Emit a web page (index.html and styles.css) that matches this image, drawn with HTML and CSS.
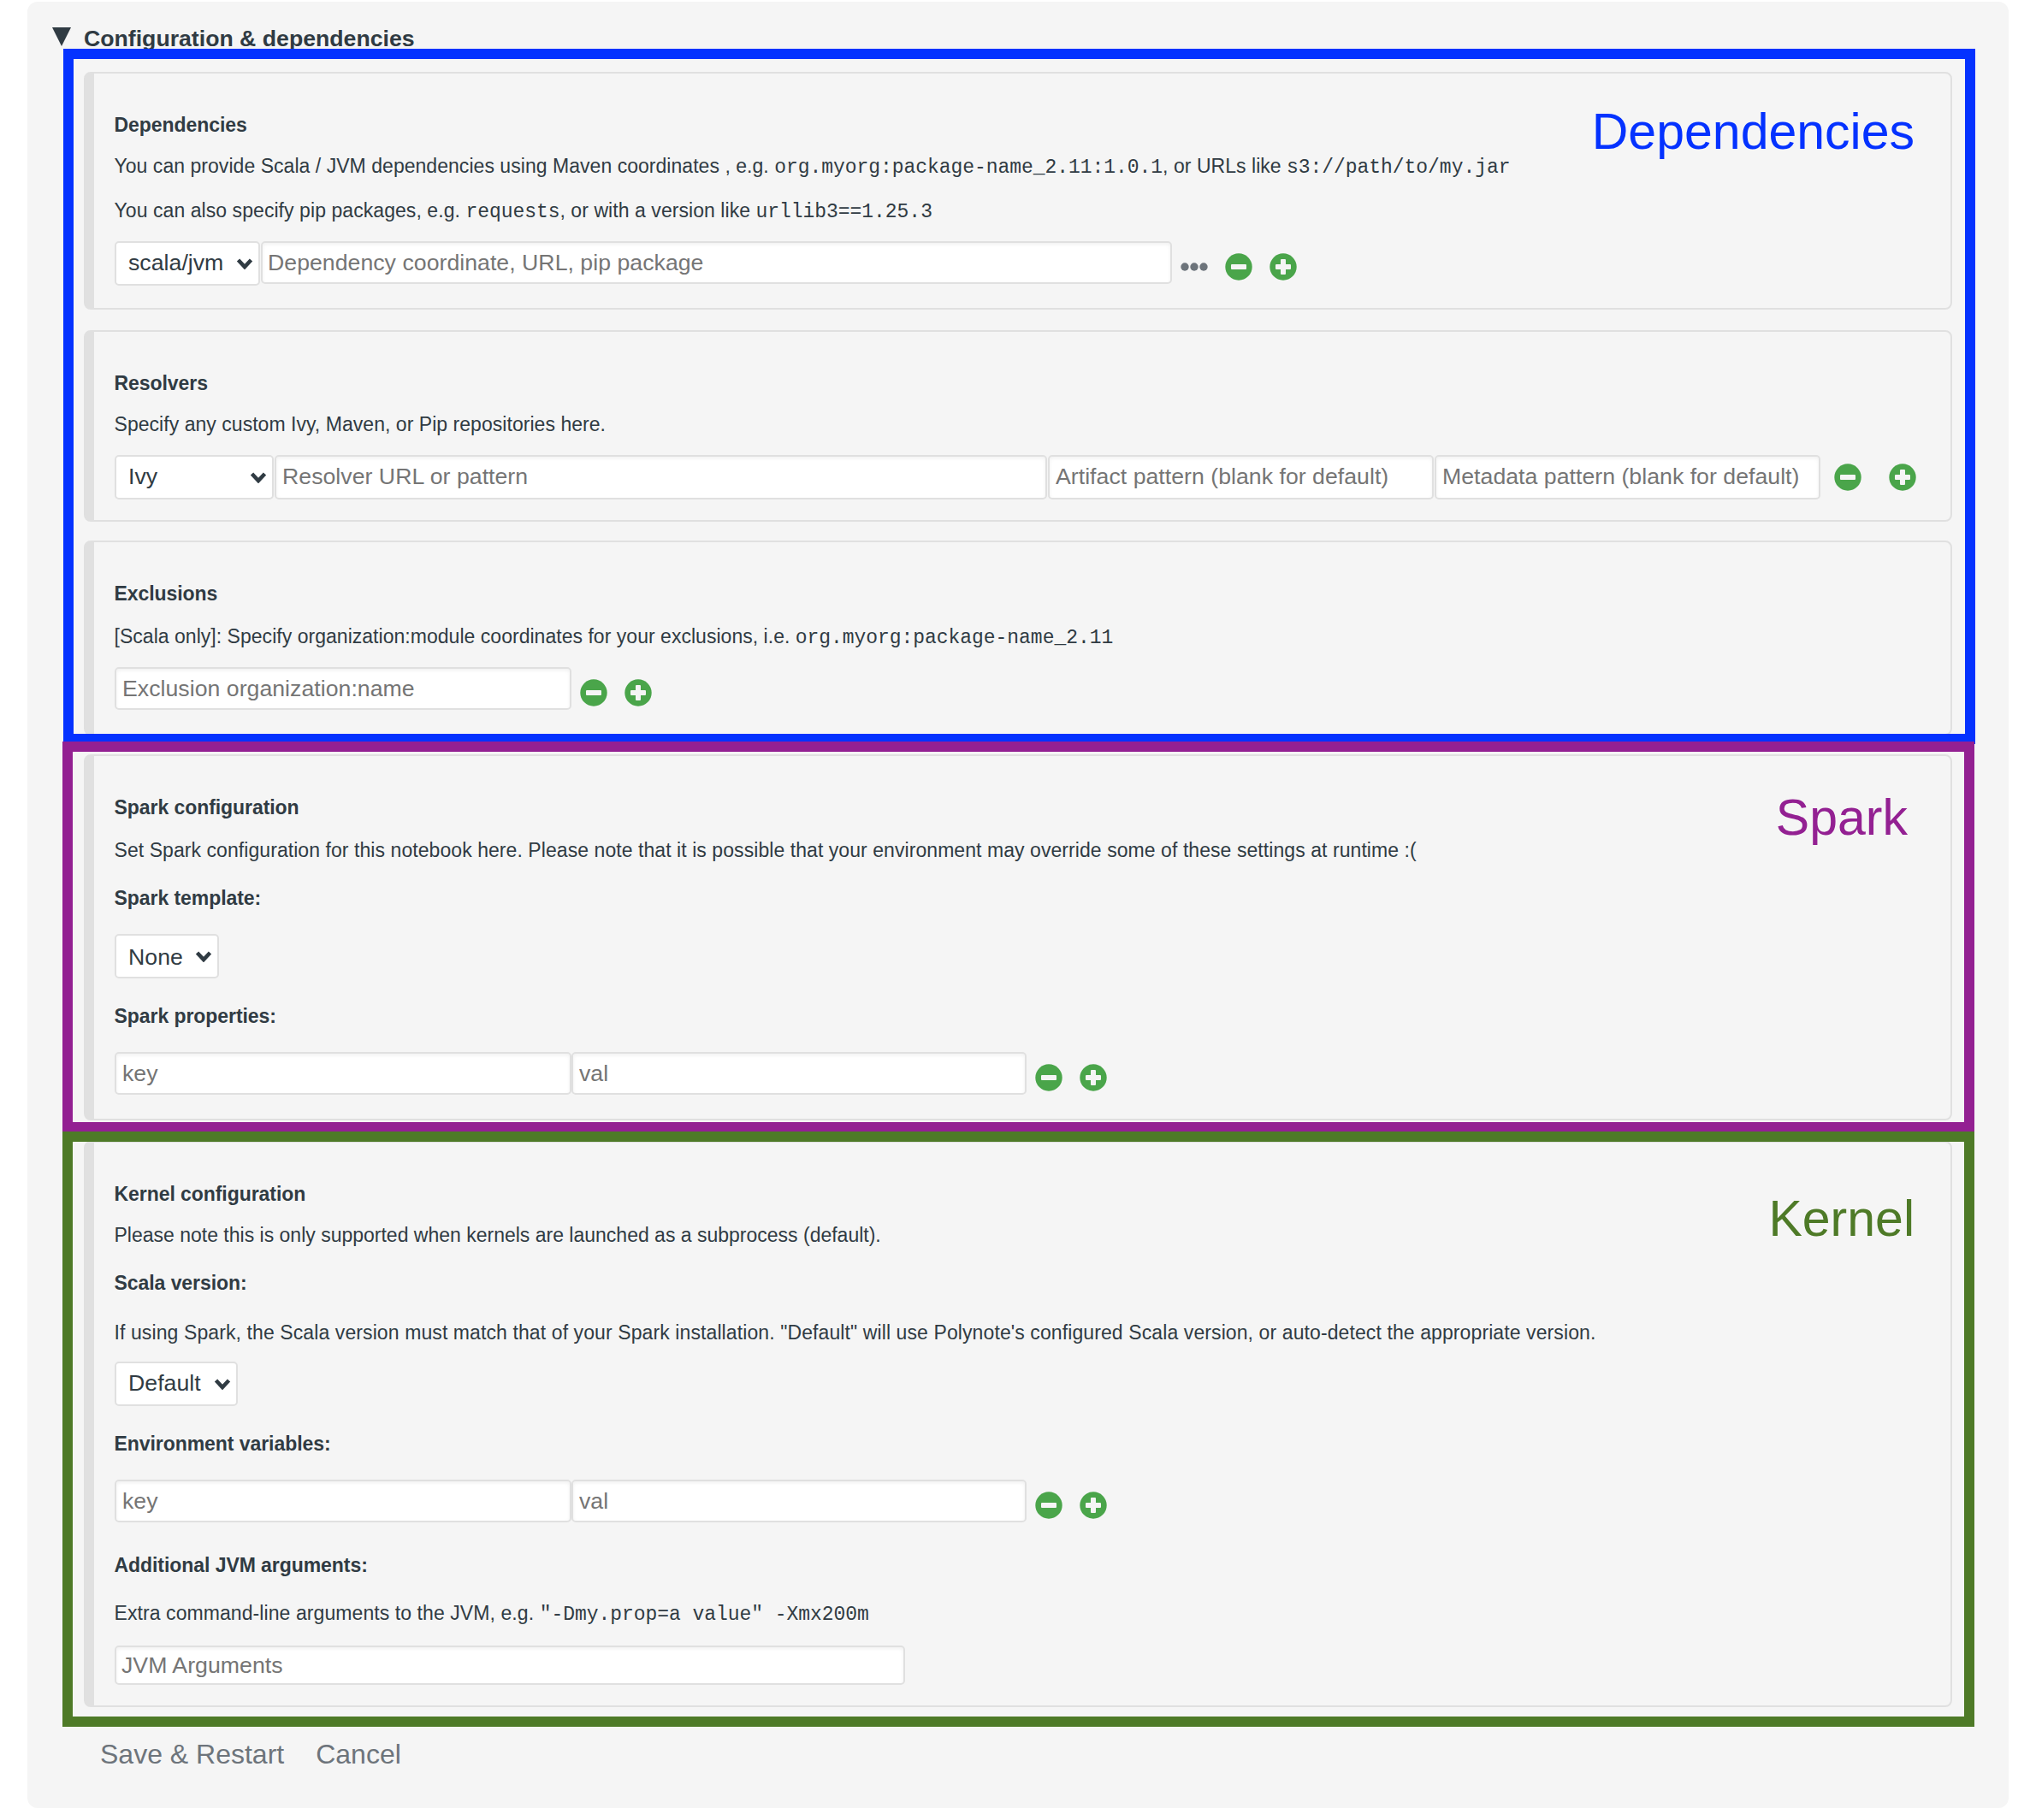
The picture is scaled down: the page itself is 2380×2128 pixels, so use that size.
FILE: index.html
```html
<!DOCTYPE html>
<html lang="en">
<head>
<meta charset="utf-8">
<title>Configuration &amp; dependencies</title>
<link rel="stylesheet" href="styles.css">
</head>
<body>
<svg class="defs" width="0" height="0" aria-hidden="true">
  <symbol id="minus" viewBox="0 0 32 32"><circle cx="16" cy="16" r="15.7" fill="#4aa54a"/><rect x="7" y="13" width="18" height="6" rx="1" fill="#f5f5f5"/></symbol>
  <symbol id="plus" viewBox="0 0 32 32"><circle cx="16" cy="16" r="15.7" fill="#4aa54a"/><path d="M8 13h5V8q0-1 1-1h4q1 0 1 1v5h5q1 0 1 1v4q0 1-1 1h-5v5q0 1-1 1h-4q-1 0-1-1v-5h-5q-1 0-1-1v-4q0-1 1-1z" fill="#f5f5f5"/></symbol>
  <symbol id="dots" viewBox="0 0 32 10"><g fill="#6d747b"><circle cx="5" cy="5" r="4.7"/><circle cx="16" cy="5" r="4.7"/><circle cx="27" cy="5" r="4.7"/></g></symbol>
  <symbol id="chevron" viewBox="0 0 20 14"><path d="M2.5 3l7.5 8 7.5-8" fill="none" stroke="#303b43" stroke-width="4.6"/></symbol>
</svg>
<main class="panel">
  <h2 class="title"><span class="arrow"></span>Configuration &amp; dependencies</h2>

  <section class="card dependencies">
    <h3>Dependencies</h3>
    <p>You can provide Scala / JVM dependencies using Maven coordinates , e.g. <code>org.myorg:package-name_2.11:1.0.1</code>, or URLs like <code>s3://path/to/my.jar</code></p>
    <p>You can also specify pip packages, e.g. <code>requests</code>, or with a version like <code>urllib3==1.25.3</code></p>
    <div class="row">
      <div class="select type"><select><option>scala/jvm</option></select><svg class="chevron"><use href="#chevron"/></svg></div>
      <input class="coordinate" placeholder="Dependency coordinate, URL, pip package">
      <svg class="dots"><use href="#dots"/></svg>
      <svg class="icon"><use href="#minus"/></svg>
      <svg class="icon"><use href="#plus"/></svg>
    </div>
  </section>

  <section class="card resolvers">
    <h3>Resolvers</h3>
    <p>Specify any custom Ivy, Maven, or Pip repositories here.</p>
    <div class="row tall">
      <div class="select repo"><select><option>Ivy</option></select><svg class="chevron"><use href="#chevron"/></svg></div>
      <input class="url" placeholder="Resolver URL or pattern">
      <input class="artifact" placeholder="Artifact pattern (blank for default)">
      <input class="metadata" placeholder="Metadata pattern (blank for default)">
      <svg class="icon"><use href="#minus"/></svg>
      <svg class="icon"><use href="#plus"/></svg>
    </div>
  </section>

  <section class="card exclusions">
    <h3>Exclusions</h3>
    <p>[Scala only]: Specify organization:module coordinates for your exclusions, i.e. <code>org.myorg:package-name_2.11</code></p>
    <div class="row">
      <input class="key" placeholder="Exclusion organization:name">
      <svg class="icon"><use href="#minus"/></svg>
      <svg class="icon"><use href="#plus"/></svg>
    </div>
  </section>

  <section class="card spark">
    <h3>Spark configuration</h3>
    <p>Set Spark configuration for this notebook here. Please note that it is possible that your environment may override some of these settings at runtime :(</p>
    <h3>Spark template:</h3>
    <div class="select template"><select><option>None</option></select><svg class="chevron"><use href="#chevron"/></svg></div>
    <h3>Spark properties:</h3>
    <div class="row">
      <input class="key" placeholder="key">
      <input class="val" placeholder="val">
      <svg class="icon"><use href="#minus"/></svg>
      <svg class="icon"><use href="#plus"/></svg>
    </div>
  </section>

  <section class="card kernel">
    <h3>Kernel configuration</h3>
    <p class="kernel-note">Please note this is only supported when kernels are launched as a subprocess (default).</p>
    <h3>Scala version:</h3>
    <p class="version-note">If using Spark, the Scala version must match that of your Spark installation. "Default" will use Polynote's configured Scala version, or auto-detect the appropriate version.</p>
    <div class="select version"><select><option>Default</option></select><svg class="chevron"><use href="#chevron"/></svg></div>
    <h3>Environment variables:</h3>
    <div class="row">
      <input class="key" placeholder="key">
      <input class="val" placeholder="val">
      <svg class="icon"><use href="#minus"/></svg>
      <svg class="icon"><use href="#plus"/></svg>
    </div>
    <h3 class="jvm-heading">Additional JVM arguments:</h3>
    <p class="jvm-note">Extra command-line arguments to the JVM, e.g. <code>"-Dmy.prop=a value" -Xmx200m</code></p>
    <input class="jvm" placeholder="JVM Arguments">
  </section>

  <div class="actions"><button>Save &amp; Restart</button><button>Cancel</button></div>

  <div class="callout callout-dependencies"><span>Dependencies</span></div>
  <div class="callout callout-spark"><span>Spark</span></div>
  <div class="callout callout-kernel"><span>Kernel</span></div>
</main>
</body>
</html>
```
FILE: styles.css
```css
* { box-sizing: border-box; }

body {
  margin: 0;
  background: #fff;
  color: #303b43;
  font-family: "Liberation Sans", Arial, sans-serif;
}

.defs { position: absolute; }

.panel {
  position: relative;
  width: 2316px;
  height: 2112px;
  margin: 2px 0 0 32px;
  padding: 28px 66px 0;
  background: #f5f5f5;
  border-radius: 12px;
}

.title {
  display: flex;
  align-items: flex-start;
  margin: 0 0 24px -37px;
  font-size: 26.67px;
  line-height: 30px;
  letter-spacing: 0;
}

.arrow {
  width: 22px;
  height: 22px;
  margin: 2px 15px 0 0;
  background: #303b43;
  clip-path: polygon(0 0, 100% 0, 50% 100%);
}

.card {
  width: 2184px;
  padding: 46px 24px 24px;
  border: 2px solid #e0e0e0;
  border-left-width: 12px;
  border-radius: 8px;
}

.dependencies { height: 278px; margin-bottom: 24px; }
.resolvers { height: 224px; margin-bottom: 22px; }
.exclusions { height: 228px; margin-bottom: 22px; }
.spark { height: 428px; margin-bottom: 24px; }
.kernel { height: 662px; }

h3, p {
  margin: 0 0 0 -0.5px;
  font-size: 23px;
  line-height: 28px;
  white-space: nowrap;
}

h3 { letter-spacing: -0.06px; }
p { margin-top: 20px; letter-spacing: 0.04px; }
p + p { margin-top: 24px; letter-spacing: 0.065px; }
p + h3 { margin-top: 28px; }
.select + h3 { margin-top: 30px; }
.exclusions p { margin-top: 22px; letter-spacing: 0.03px; }
.spark p { margin-top: 22px; letter-spacing: 0.065px; }
h3 + .select, h3 + .row { margin-top: 28px; }
.kernel-note { letter-spacing: 0; }
.version-note { margin-top: 30px; letter-spacing: 0.1px; }
.version-note + .select { margin-top: 20px; }
.jvm-heading { margin-top: 36px; }
.jvm-note { margin-top: 28px; letter-spacing: 0.08px; }

code {
  font: 23px/1 "Liberation Mono", "Courier New", monospace;
  letter-spacing: -0.05px;
}

.row {
  display: flex;
  align-items: flex-start;
  margin-top: 22px;
}

input, select {
  display: block;
  height: 50px;
  margin: 0;
  padding: 0 7px;
  border: 2px solid #e0e0e0;
  border-radius: 5px;
  background: #fff;
  color: #303b43;
  font: 26.67px "Liberation Sans", Arial, sans-serif;
  letter-spacing: 0.03px;
}

input { flex: none; box-shadow: inset 0 2px 4px rgba(0, 0, 0, 0.06); }
input::placeholder { color: #757575; opacity: 1; }

.select { position: relative; flex: none; height: 52px; }
.select select {
  width: 100%;
  height: 52px;
  padding: 0 0 2px 14px;
  appearance: none;
}
.template select { padding: 2px 0 0 14px; }
.chevron {
  position: absolute;
  right: 8px;
  top: 19px;
  width: 20px;
  height: 14px;
  pointer-events: none;
}

.type { width: 170px; }
.coordinate { width: 1065px; margin-left: 1px; padding-left: 6px; }
.tall input { height: 52px; padding-bottom: 2px; }
.repo { width: 186px; }
.url { width: 903px; margin-left: 1px; }
.artifact { width: 451px; margin-left: 1px; }
.metadata { width: 451px; margin-left: 1px; }
.key { width: 534px; }
.val { width: 532px; }
.template { width: 122px; }
.version { width: 144px; }
.jvm { width: 924px; height: 46px; margin-top: 24px; padding-left: 6px; }

.icon { flex: none; width: 32px; height: 32px; margin: 14px 0 0 20px; }
input + .icon { margin-left: 10px; }
.dots { flex: none; width: 32px; height: 10px; margin: 25px 0 0 10px; }
.tall .icon { margin: 10px 0 0 32px; }
.tall input + .icon { margin-left: 16px; }

.actions { display: flex; gap: 37px; margin: 37px 0 0 19px; }
button {
  padding: 0;
  border: 0;
  background: none;
  color: #6d747b;
  font: 32px/36px "Liberation Sans", Arial, sans-serif;
}

/* Coloured callout frames laid over the groups of cards */
.callout {
  position: absolute;
  left: 41px;
  width: 2235px;
  border: 12px solid;
  pointer-events: none;
}
.callout span {
  position: absolute;
  font-size: 59px;
  line-height: 68px;
}
.callout-dependencies { left: 42px; top: 55px; height: 813px; color: #0432ff; }
.callout-dependencies span { top: 51px; right: 59px; }
.callout-spark { top: 865px; height: 457px; color: #932092; }
.callout-spark span { top: 43px; right: 66px; }
.callout-kernel { top: 1321px; height: 696px; color: #4e7a27; }
.callout-kernel span { top: 56px; right: 58px; }
```
